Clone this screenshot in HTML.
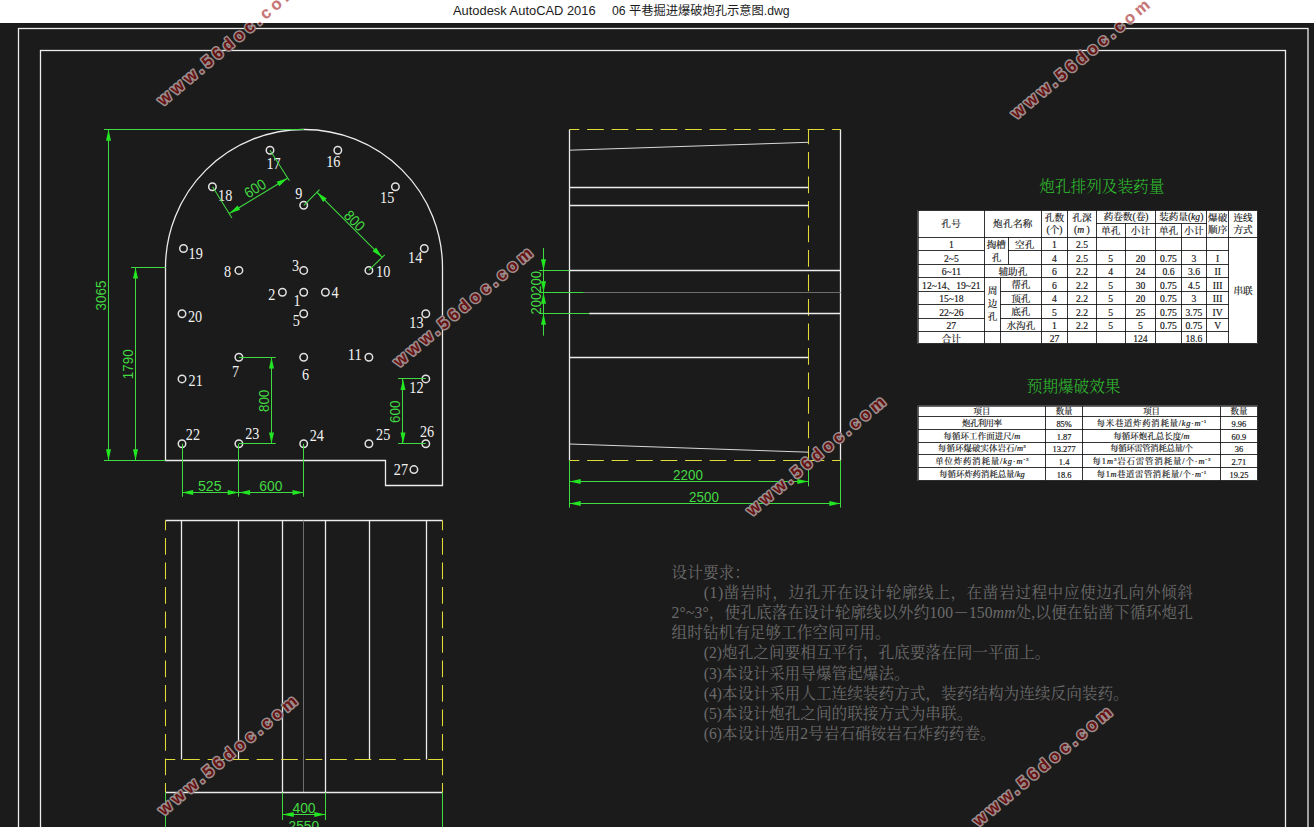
<!DOCTYPE html>
<html lang="zh-CN">
<head>
<meta charset="utf-8">
<title>06 平巷掘进爆破炮孔示意图.dwg</title>
<style>
html,body{margin:0;padding:0;background:#1b1b1b;}
body{width:1314px;height:827px;overflow:hidden;position:relative;font-family:"Liberation Sans","Noto Sans CJK SC",sans-serif;}
#titlebar{position:absolute;left:0;top:0;width:1314px;height:23px;background:#ffffff;color:#111;font-size:12px;line-height:22px;white-space:pre;}
#titletext{position:absolute;left:0;top:0;width:1314px;height:23px;color:#1c1c1c;line-height:22px;white-space:pre;}
#titletext span{position:absolute;top:0;}
#titletext .t1{left:453px;font-size:12.9px;}
#titletext .t2{left:612px;font-size:12.25px;}
#cad{position:absolute;left:0;top:0;width:1314px;height:827px;display:block;}
.w{stroke:#ececec;stroke-width:1.3;fill:none;}
.wt2{stroke:#d8d8d8;stroke-width:1;fill:none;}
.gr{stroke:#6e6e6e;stroke-width:1;fill:none;}
.g{stroke:#42da42;stroke-width:1.05;fill:none;}
.y{stroke:#e2da38;stroke-width:1.05;fill:none;}
.ar{fill:#22e622;stroke:none;}
.h{stroke:#e2e2e2;stroke-width:1.5;fill:none;}
.gt{fill:#42da42;font-family:"Liberation Sans",sans-serif;}
.wt{fill:#f2f2f2;font-family:"Liberation Serif",serif;}
.tb{fill:#ffffff;stroke:none;}
.tl{stroke:#000000;stroke-width:0.8;}
.tt{fill:#161616;stroke:#161616;stroke-width:0.18px;font-family:"Liberation Serif","Noto Serif CJK SC",serif;}
.it{font-style:italic;}
.sup{font-size:5px;}
.ttl{fill:#2fc02f;font-weight:300;font-size:15.6px;font-family:"Liberation Serif","Noto Serif CJK SC",serif;}
.nt{fill:#6b6b6b;font-size:15.65px;font-family:"Liberation Serif","Noto Serif CJK SC",serif;white-space:pre;}
.wm{fill:#681313;stroke:#9a8e8e;stroke-width:3px;paint-order:stroke fill;stroke-linejoin:round;font-family:"Liberation Sans",sans-serif;font-weight:bold;font-size:16.5px;}
.wml{fill:#c47474;stroke:#fbf3f3;stroke-width:1.2px;}
</style>
</head>
<body>
<div id="titlebar"></div>
<svg id="cad" width="1314" height="827" viewBox="0 0 1314 827">
<rect x="0" y="23" width="1314" height="804" fill="#1b1b1b"/>
<rect class="w" x="18.5" y="28.5" width="1289.5" height="820"/>
<rect class="w" x="40.5" y="50.5" width="1245" height="800"/>
<path class="w" d="M165.5 460.5 L165.5 267.4 A138.5 137.9 0 0 1 442.5 267.4 L442.5 485.5 L385.5 485.5 L385.5 460.5 Z" />
<circle class="h" cx="303.7" cy="292.2" r="3.75"/>
<circle class="h" cx="282.4" cy="292.2" r="3.75"/>
<circle class="h" cx="303.7" cy="270.4" r="3.75"/>
<circle class="h" cx="325.4" cy="292.2" r="3.75"/>
<circle class="h" cx="303.7" cy="313.8" r="3.75"/>
<circle class="h" cx="303.7" cy="357.3" r="3.75"/>
<circle class="h" cx="238.9" cy="357.3" r="3.75"/>
<circle class="h" cx="238.9" cy="270.4" r="3.75"/>
<circle class="h" cx="303.7" cy="205.3" r="3.75"/>
<circle class="h" cx="368.9" cy="270.4" r="3.75"/>
<circle class="h" cx="368.9" cy="357.3" r="3.75"/>
<circle class="h" cx="425.8" cy="378.9" r="3.75"/>
<circle class="h" cx="425.8" cy="313.8" r="3.75"/>
<circle class="h" cx="424.3" cy="248.5" r="3.75"/>
<circle class="h" cx="395.4" cy="186.7" r="3.75"/>
<circle class="h" cx="337.8" cy="150.2" r="3.75"/>
<circle class="h" cx="270" cy="150.2" r="3.75"/>
<circle class="h" cx="212.4" cy="186.7" r="3.75"/>
<circle class="h" cx="183.5" cy="248.5" r="3.75"/>
<circle class="h" cx="182" cy="313.8" r="3.75"/>
<circle class="h" cx="182" cy="378.9" r="3.75"/>
<circle class="h" cx="182" cy="443.8" r="3.75"/>
<circle class="h" cx="238.9" cy="443.8" r="3.75"/>
<circle class="h" cx="303.7" cy="443.8" r="3.75"/>
<circle class="h" cx="368.9" cy="443.8" r="3.75"/>
<circle class="h" cx="425.8" cy="443.8" r="3.75"/>
<circle class="h" cx="413.9" cy="469.6" r="3.75"/>
<text class="wt" font-size="16.8" textLength="14.2" lengthAdjust="spacingAndGlyphs" text-anchor="middle" x="273.6" y="169.18">17</text>
<text class="wt" font-size="16.8" textLength="14.2" lengthAdjust="spacingAndGlyphs" text-anchor="middle" x="333.3" y="167.08">16</text>
<text class="wt" font-size="16.8" textLength="14.2" lengthAdjust="spacingAndGlyphs" text-anchor="middle" x="225.2" y="201.08">18</text>
<text class="wt" font-size="16.8" textLength="7.1" lengthAdjust="spacingAndGlyphs" text-anchor="middle" x="298.9" y="198.98">9</text>
<text class="wt" font-size="16.8" textLength="14.2" lengthAdjust="spacingAndGlyphs" text-anchor="middle" x="387.2" y="202.98">15</text>
<text class="wt" font-size="16.8" textLength="14.2" lengthAdjust="spacingAndGlyphs" text-anchor="middle" x="195.7" y="258.68">19</text>
<text class="wt" font-size="16.8" textLength="14.2" lengthAdjust="spacingAndGlyphs" text-anchor="middle" x="415.2" y="263.18">14</text>
<text class="wt" font-size="16.8" textLength="7.1" lengthAdjust="spacingAndGlyphs" text-anchor="middle" x="227.6" y="276.88">8</text>
<text class="wt" font-size="16.8" textLength="7.1" lengthAdjust="spacingAndGlyphs" text-anchor="middle" x="295.5" y="271.18">3</text>
<text class="wt" font-size="16.8" textLength="14.2" lengthAdjust="spacingAndGlyphs" text-anchor="middle" x="383.2" y="276.88">10</text>
<text class="wt" font-size="16.8" textLength="7.1" lengthAdjust="spacingAndGlyphs" text-anchor="middle" x="271.8" y="300.08">2</text>
<text class="wt" font-size="16.8" textLength="7.1" lengthAdjust="spacingAndGlyphs" text-anchor="middle" x="297.1" y="306.18">1</text>
<text class="wt" font-size="16.8" textLength="7.1" lengthAdjust="spacingAndGlyphs" text-anchor="middle" x="335.1" y="298.28">4</text>
<text class="wt" font-size="16.8" textLength="14.2" lengthAdjust="spacingAndGlyphs" text-anchor="middle" x="195.1" y="322.28">20</text>
<text class="wt" font-size="16.8" textLength="7.1" lengthAdjust="spacingAndGlyphs" text-anchor="middle" x="296.4" y="325.98">5</text>
<text class="wt" font-size="16.8" textLength="14.2" lengthAdjust="spacingAndGlyphs" text-anchor="middle" x="416.4" y="328.08">13</text>
<text class="wt" font-size="16.8" textLength="14.2" lengthAdjust="spacingAndGlyphs" text-anchor="middle" x="354.9" y="360.18">11</text>
<text class="wt" font-size="16.8" textLength="7.1" lengthAdjust="spacingAndGlyphs" text-anchor="middle" x="235.6" y="376.88">7</text>
<text class="wt" font-size="16.8" textLength="7.1" lengthAdjust="spacingAndGlyphs" text-anchor="middle" x="305.6" y="380.28">6</text>
<text class="wt" font-size="16.8" textLength="14.2" lengthAdjust="spacingAndGlyphs" text-anchor="middle" x="195.7" y="386.08">21</text>
<text class="wt" font-size="16.8" textLength="14.2" lengthAdjust="spacingAndGlyphs" text-anchor="middle" x="416.4" y="393.08">12</text>
<text class="wt" font-size="16.8" textLength="14.2" lengthAdjust="spacingAndGlyphs" text-anchor="middle" x="192.9" y="439.88">22</text>
<text class="wt" font-size="16.8" textLength="14.2" lengthAdjust="spacingAndGlyphs" text-anchor="middle" x="252.3" y="438.98">23</text>
<text class="wt" font-size="16.8" textLength="14.2" lengthAdjust="spacingAndGlyphs" text-anchor="middle" x="316.8" y="441.18">24</text>
<text class="wt" font-size="16.8" textLength="14.2" lengthAdjust="spacingAndGlyphs" text-anchor="middle" x="383.2" y="439.88">25</text>
<text class="wt" font-size="16.8" textLength="14.2" lengthAdjust="spacingAndGlyphs" text-anchor="middle" x="427" y="436.58">26</text>
<text class="wt" font-size="16.8" textLength="14.2" lengthAdjust="spacingAndGlyphs" text-anchor="middle" x="400.9" y="475.28">27</text>
<line class="g" x1="104" y1="129.5" x2="304" y2="129.5"/>
<line class="g" x1="104" y1="460.5" x2="165.5" y2="460.5"/>
<line class="g" x1="108.5" y1="129.5" x2="108.5" y2="460.5"/>
<polygon class="ar" points="108.5,129.5 111,140.7 106,140.7"/>
<polygon class="ar" points="108.5,460.5 106,449.3 111,449.3"/>
<text class="gt" font-size="15" textLength="29.8" lengthAdjust="spacingAndGlyphs" text-anchor="middle" transform="translate(100.7 295.5) rotate(-90)" x="0" y="5.37">3065</text>
<line class="g" x1="131" y1="267.5" x2="165.5" y2="267.5"/>
<line class="g" x1="135.5" y1="267.4" x2="135.5" y2="460.5"/>
<polygon class="ar" points="135.5,267.4 138,278.6 133,278.6"/>
<polygon class="ar" points="135.5,460.5 133,449.3 138,449.3"/>
<text class="gt" font-size="15" textLength="29.8" lengthAdjust="spacingAndGlyphs" text-anchor="middle" transform="translate(127.8 364.3) rotate(-90)" x="0" y="5.37">1790</text>
<line class="g" x1="238.9" y1="357.5" x2="275.7" y2="357.5"/>
<line class="g" x1="238.9" y1="443.5" x2="275.7" y2="443.5"/>
<line class="g" x1="271.5" y1="357.3" x2="271.5" y2="443.8"/>
<polygon class="ar" points="271.5,357.3 274,368.5 269,368.5"/>
<polygon class="ar" points="271.5,443.8 269,432.6 274,432.6"/>
<text class="gt" font-size="15" textLength="22.35" lengthAdjust="spacingAndGlyphs" text-anchor="middle" transform="translate(263.6 400.9) rotate(-90)" x="0" y="5.37">800</text>
<line class="g" x1="425.8" y1="378.5" x2="398.1" y2="378.5"/>
<line class="g" x1="425.8" y1="443.5" x2="398.1" y2="443.5"/>
<line class="g" x1="402.5" y1="378.9" x2="402.5" y2="443.8"/>
<polygon class="ar" points="403,378.9 405.5,390.1 400.5,390.1"/>
<polygon class="ar" points="403,443.8 400.5,432.6 405.5,432.6"/>
<text class="gt" font-size="15" textLength="22.35" lengthAdjust="spacingAndGlyphs" text-anchor="middle" transform="translate(394.5 411.8) rotate(-90)" x="0" y="5.37">600</text>
<line class="g" x1="182.5" y1="443.8" x2="182.5" y2="496.7"/>
<line class="g" x1="238.5" y1="443.8" x2="238.5" y2="496.7"/>
<line class="g" x1="303.5" y1="443.8" x2="303.5" y2="496.7"/>
<line class="g" x1="182" y1="492.5" x2="303.7" y2="492.5"/>
<polygon class="ar" points="182,492.5 193.2,490 193.2,495"/>
<polygon class="ar" points="238.9,492.5 227.7,495 227.7,490"/>
<polygon class="ar" points="238.9,492.5 250.1,490 250.1,495"/>
<polygon class="ar" points="303.7,492.5 292.5,495 292.5,490"/>
<text class="gt" font-size="15" textLength="23.55" lengthAdjust="spacingAndGlyphs" text-anchor="middle" transform="translate(209.7 485.8) rotate(0)" x="0" y="5.37">525</text>
<text class="gt" font-size="15" textLength="23.1" lengthAdjust="spacingAndGlyphs" text-anchor="middle" transform="translate(270.9 485.8) rotate(0)" x="0" y="5.37">600</text>
<line class="g" x1="270" y1="150.3" x2="289.4" y2="180.7"/>
<line class="g" x1="212.6" y1="186.7" x2="231.9" y2="218"/>
<line class="g" x1="229.3" y1="213.5" x2="287.5" y2="178.2"/>
<polygon class="ar" points="287.5,178.2 279.22,186.15 276.63,181.87"/>
<polygon class="ar" points="229.3,213.5 237.58,205.55 240.17,209.83"/>
<text class="gt" font-size="15" textLength="22.35" lengthAdjust="spacingAndGlyphs" text-anchor="middle" transform="translate(254.9 188.3) rotate(-31.5)" x="0" y="5.37">600</text>
<line class="g" x1="303.9" y1="205.4" x2="319.5" y2="189.6"/>
<line class="g" x1="368.9" y1="270.2" x2="384.7" y2="254.8"/>
<line class="g" x1="317" y1="192.3" x2="382.2" y2="257.3"/>
<polygon class="ar" points="317,192.3 326.69,198.45 323.15,201.99"/>
<polygon class="ar" points="382.2,257.3 372.51,251.15 376.05,247.61"/>
<text class="gt" font-size="15" textLength="22.35" lengthAdjust="spacingAndGlyphs" text-anchor="middle" transform="translate(354.7 220.5) rotate(45)" x="0" y="5.37">800</text>
<line class="w" x1="569.5" y1="129.5" x2="569.5" y2="460.5"/>
<line class="w" x1="840.5" y1="129.5" x2="840.5" y2="460.5"/>
<line class="y" x1="569.5" y1="129.5" x2="840.5" y2="129.5" stroke-dasharray="16.7 7.8" stroke-dashoffset="6.9"/>
<line class="y" x1="569.5" y1="460.5" x2="840.5" y2="460.5" stroke-dasharray="16.7 7.8" stroke-dashoffset="6.9"/>
<line class="y" x1="808.5" y1="129.5" x2="808.5" y2="460.5" stroke-dasharray="16.7 7.8" stroke-dashoffset="1.9"/>
<line class="wt2" x1="569.5" y1="150.2" x2="808.5" y2="142.3"/>
<line class="w" x1="569.5" y1="187.5" x2="808.5" y2="187.5"/>
<line class="w" x1="569.5" y1="205.5" x2="808.5" y2="205.5"/>
<line class="w" x1="569.5" y1="270.5" x2="840.5" y2="270.5"/>
<line class="gr" x1="583.8" y1="292.5" x2="840.5" y2="292.5"/>
<line class="w" x1="589.2" y1="313.5" x2="840.5" y2="313.5"/>
<line class="w" x1="569.5" y1="357.5" x2="808.5" y2="357.5"/>
<line class="wt2" x1="569.5" y1="444" x2="808.5" y2="452.2"/>
<line class="g" x1="543.5" y1="248" x2="543.5" y2="335.7"/>
<line class="g" x1="539.3" y1="270.5" x2="569.5" y2="270.5"/>
<line class="g" x1="539.3" y1="292.5" x2="583.8" y2="292.5"/>
<line class="g" x1="539.3" y1="313.5" x2="589.2" y2="313.5"/>
<polygon class="ar" points="543.5,270.5 541,259.3 546,259.3"/>
<polygon class="ar" points="543.5,292.5 541,281.3 546,281.3"/>
<polygon class="ar" points="543.5,292.5 546,303.7 541,303.7"/>
<polygon class="ar" points="543.5,313.5 546,324.7 541,324.7"/>
<text class="gt" font-size="15" textLength="21.75" lengthAdjust="spacingAndGlyphs" text-anchor="middle" transform="translate(535.9 281.8) rotate(-90)" x="0" y="5.37">200</text>
<text class="gt" font-size="15" textLength="21.75" lengthAdjust="spacingAndGlyphs" text-anchor="middle" transform="translate(535.9 303.5) rotate(-90)" x="0" y="5.37">200</text>
<line class="g" x1="569.5" y1="460.5" x2="569.5" y2="507.6"/>
<line class="g" x1="808.5" y1="460.5" x2="808.5" y2="486.3"/>
<line class="g" x1="840.5" y1="460.5" x2="840.5" y2="507.6"/>
<line class="g" x1="569.5" y1="481.5" x2="808.5" y2="481.5"/>
<line class="g" x1="569.5" y1="503.5" x2="840.5" y2="503.5"/>
<polygon class="ar" points="569.5,481.5 580.7,479 580.7,484"/>
<polygon class="ar" points="808.5,481.5 797.3,484 797.3,479"/>
<polygon class="ar" points="569.5,503.5 580.7,501 580.7,506"/>
<polygon class="ar" points="840.5,503.5 829.3,506 829.3,501"/>
<text class="gt" font-size="15" textLength="29.8" lengthAdjust="spacingAndGlyphs" text-anchor="middle" transform="translate(688 474.5) rotate(0)" x="0" y="5.37">2200</text>
<text class="gt" font-size="15" textLength="29.8" lengthAdjust="spacingAndGlyphs" text-anchor="middle" transform="translate(704 496.5) rotate(0)" x="0" y="5.37">2500</text>
<line class="w" x1="165.5" y1="520.5" x2="442.5" y2="520.5"/>
<line class="w" x1="181.5" y1="520.5" x2="181.5" y2="759.5"/>
<line class="w" x1="238.5" y1="520.5" x2="238.5" y2="759.5"/>
<line class="w" x1="369.5" y1="520.5" x2="369.5" y2="759.5"/>
<line class="w" x1="426.5" y1="520.5" x2="426.5" y2="759.5"/>
<line class="w" x1="282.5" y1="520.5" x2="282.5" y2="792.5"/>
<line class="w" x1="325.5" y1="520.5" x2="325.5" y2="792.5"/>
<line class="gr" x1="303.5" y1="520.5" x2="303.5" y2="792.5"/>
<line class="w" x1="165.5" y1="792.5" x2="442.5" y2="792.5"/>
<line class="y" x1="165.5" y1="520.5" x2="165.5" y2="792.5" stroke-dasharray="16.7 7.8" stroke-dashoffset="6.9"/>
<line class="y" x1="442.5" y1="520.5" x2="442.5" y2="792.5" stroke-dasharray="16.7 7.8" stroke-dashoffset="6.9"/>
<line class="y" x1="165.5" y1="759.5" x2="442.5" y2="759.5" stroke-dasharray="16.7 7.8" stroke-dashoffset="6.9"/>
<line class="g" x1="165.5" y1="792.5" x2="165.5" y2="840"/>
<line class="g" x1="442.5" y1="792.5" x2="442.5" y2="840"/>
<line class="g" x1="282.5" y1="792.5" x2="282.5" y2="820"/>
<line class="g" x1="325.5" y1="792.5" x2="325.5" y2="820"/>
<line class="g" x1="282.5" y1="814.5" x2="325.5" y2="814.5"/>
<polygon class="ar" points="282.5,814.5 293.7,812 293.7,817"/>
<polygon class="ar" points="325.5,814.5 314.3,817 314.3,812"/>
<text class="gt" font-size="15" textLength="23.1" lengthAdjust="spacingAndGlyphs" text-anchor="middle" transform="translate(304 807.8) rotate(0)" x="0" y="5.37">400</text>
<text class="gt" font-size="15" textLength="30.4" lengthAdjust="spacingAndGlyphs" text-anchor="middle" transform="translate(303.8 825.3) rotate(0)" x="0" y="5.37">2550</text>
<rect class="tb" x="917.7" y="210" width="340.2" height="133.9"/>
<rect class="tl" fill="none" x="918.2" y="210.5" width="339.2" height="132.9"/>
<line class="tl" x1="984.5" y1="210.5" x2="984.5" y2="237.1"/>
<line class="tl" x1="1041.5" y1="210.5" x2="1041.5" y2="237.1"/>
<line class="tl" x1="1067.5" y1="210.5" x2="1067.5" y2="237.1"/>
<line class="tl" x1="1096.5" y1="210.5" x2="1096.5" y2="237.1"/>
<line class="tl" x1="1155.5" y1="210.5" x2="1155.5" y2="237.1"/>
<line class="tl" x1="1206.5" y1="210.5" x2="1206.5" y2="237.1"/>
<line class="tl" x1="1228.5" y1="210.5" x2="1228.5" y2="237.1"/>
<line class="tl" x1="1125.5" y1="223.4" x2="1125.5" y2="237.1"/>
<line class="tl" x1="1181.5" y1="223.4" x2="1181.5" y2="237.1"/>
<line class="tl" x1="1096.3" y1="223.5" x2="1206.7" y2="223.5"/>
<line class="tl" x1="918.2" y1="237.5" x2="1257.4" y2="237.5"/>
<line class="tl" x1="984.5" y1="237.1" x2="984.5" y2="343.4"/>
<line class="tl" x1="1041.5" y1="237.1" x2="1041.5" y2="343.4"/>
<line class="tl" x1="1067.5" y1="237.1" x2="1067.5" y2="343.4"/>
<line class="tl" x1="1096.5" y1="237.1" x2="1096.5" y2="343.4"/>
<line class="tl" x1="1125.5" y1="237.1" x2="1125.5" y2="343.4"/>
<line class="tl" x1="1155.5" y1="237.1" x2="1155.5" y2="343.4"/>
<line class="tl" x1="1181.5" y1="237.1" x2="1181.5" y2="343.4"/>
<line class="tl" x1="1206.5" y1="237.1" x2="1206.5" y2="343.4"/>
<line class="tl" x1="1228.5" y1="237.1" x2="1228.5" y2="343.4"/>
<line class="tl" x1="918.2" y1="250.5" x2="984.5" y2="250.5"/>
<line class="tl" x1="1041.3" y1="250.5" x2="1228.6" y2="250.5"/>
<line class="tl" x1="918.2" y1="264.5" x2="984.5" y2="264.5"/>
<line class="tl" x1="1041.3" y1="264.5" x2="1228.6" y2="264.5"/>
<line class="tl" x1="918.2" y1="277.5" x2="984.5" y2="277.5"/>
<line class="tl" x1="1041.3" y1="277.5" x2="1228.6" y2="277.5"/>
<line class="tl" x1="918.2" y1="291.5" x2="984.5" y2="291.5"/>
<line class="tl" x1="1041.3" y1="291.5" x2="1228.6" y2="291.5"/>
<line class="tl" x1="918.2" y1="304.5" x2="984.5" y2="304.5"/>
<line class="tl" x1="1041.3" y1="304.5" x2="1228.6" y2="304.5"/>
<line class="tl" x1="918.2" y1="318.5" x2="984.5" y2="318.5"/>
<line class="tl" x1="1041.3" y1="318.5" x2="1228.6" y2="318.5"/>
<line class="tl" x1="918.2" y1="331.5" x2="984.5" y2="331.5"/>
<line class="tl" x1="1041.3" y1="331.5" x2="1228.6" y2="331.5"/>
<line class="tl" x1="1008.5" y1="237.1" x2="1008.5" y2="264.5"/>
<line class="tl" x1="1008.1" y1="250.5" x2="1041.3" y2="250.5"/>
<line class="tl" x1="984.5" y1="264.5" x2="1041.3" y2="264.5"/>
<line class="tl" x1="984.5" y1="277.5" x2="1041.3" y2="277.5"/>
<line class="tl" x1="1000.5" y1="277.7" x2="1000.5" y2="343.4"/>
<line class="tl" x1="1000.4" y1="291.5" x2="1041.3" y2="291.5"/>
<line class="tl" x1="1000.4" y1="304.5" x2="1041.3" y2="304.5"/>
<line class="tl" x1="1000.4" y1="318.5" x2="1041.3" y2="318.5"/>
<line class="tl" x1="984.5" y1="331.5" x2="1041.3" y2="331.5"/>
<text class="tt" font-size="9.6" text-anchor="middle" x="951.35" y="227.26" letter-spacing="0.6">孔号</text>
<text class="tt" font-size="9.6" text-anchor="middle" x="1012.9" y="227.26" letter-spacing="0.3">炮孔名称</text>
<text class="tt" font-size="9.6" text-anchor="middle" x="1054.45" y="220.96">孔数</text>
<text class="tt" font-size="9.6" text-anchor="middle" x="1054.45" y="232.96">(个)</text>
<text class="tt" font-size="9.6" text-anchor="middle" x="1081.95" y="220.96">孔深</text>
<text class="tt" font-size="9.6" text-anchor="middle" x="1081.95" y="232.96">(<tspan class="it">m</tspan> )</text>
<text class="tt" font-size="9.6" text-anchor="middle" x="1126.05" y="220.46">药卷数(卷)</text>
<text class="tt" font-size="9.6" text-anchor="middle" x="1181.25" y="220.46">装药量(<tspan class="it">kg</tspan>)</text>
<text class="tt" font-size="9.6" text-anchor="middle" x="1110.7" y="233.96">单孔</text>
<text class="tt" font-size="9.6" text-anchor="middle" x="1140.45" y="233.96">小计</text>
<text class="tt" font-size="9.6" text-anchor="middle" x="1168.5" y="233.96">单孔</text>
<text class="tt" font-size="9.6" text-anchor="middle" x="1193.95" y="233.96">小计</text>
<text class="tt" font-size="9.6" text-anchor="middle" x="1217.65" y="220.96">爆破</text>
<text class="tt" font-size="9.6" text-anchor="middle" x="1217.65" y="232.96">顺序</text>
<text class="tt" font-size="9.6" text-anchor="middle" x="1243" y="220.96">连线</text>
<text class="tt" font-size="9.6" text-anchor="middle" x="1243" y="232.96">方式</text>
<text class="tt" font-size="9.6" text-anchor="middle" x="951.35" y="248.01">1</text>
<text class="tt" font-size="9.6" text-anchor="middle" x="1054.45" y="248.01">1</text>
<text class="tt" font-size="9.6" text-anchor="middle" x="1081.95" y="248.01">2.5</text>
<text class="tt" font-size="9.6" text-anchor="middle" x="951.35" y="261.71">2~5</text>
<text class="tt" font-size="9.6" text-anchor="middle" x="1054.45" y="261.71">4</text>
<text class="tt" font-size="9.6" text-anchor="middle" x="1081.95" y="261.71">2.5</text>
<text class="tt" font-size="9.6" text-anchor="middle" x="1110.7" y="261.71">5</text>
<text class="tt" font-size="9.6" text-anchor="middle" x="1140.45" y="261.71">20</text>
<text class="tt" font-size="9.6" text-anchor="middle" x="1168.5" y="261.71">0.75</text>
<text class="tt" font-size="9.6" text-anchor="middle" x="1193.95" y="261.71">3</text>
<text class="tt" font-size="9.6" text-anchor="middle" x="1217.65" y="261.71">I</text>
<text class="tt" font-size="9.6" text-anchor="middle" x="951.35" y="275.16">6~11</text>
<text class="tt" font-size="9.6" text-anchor="middle" x="1054.45" y="275.16">6</text>
<text class="tt" font-size="9.6" text-anchor="middle" x="1081.95" y="275.16">2.2</text>
<text class="tt" font-size="9.6" text-anchor="middle" x="1110.7" y="275.16">4</text>
<text class="tt" font-size="9.6" text-anchor="middle" x="1140.45" y="275.16">24</text>
<text class="tt" font-size="9.6" text-anchor="middle" x="1168.5" y="275.16">0.6</text>
<text class="tt" font-size="9.6" text-anchor="middle" x="1193.95" y="275.16">3.6</text>
<text class="tt" font-size="9.6" text-anchor="middle" x="1217.65" y="275.16">II</text>
<text class="tt" font-size="9.6" text-anchor="middle" x="951.35" y="288.61" textLength="58.5" lengthAdjust="spacingAndGlyphs">12~14、19~21</text>
<text class="tt" font-size="9.6" text-anchor="middle" x="1054.45" y="288.61">6</text>
<text class="tt" font-size="9.6" text-anchor="middle" x="1081.95" y="288.61">2.2</text>
<text class="tt" font-size="9.6" text-anchor="middle" x="1110.7" y="288.61">5</text>
<text class="tt" font-size="9.6" text-anchor="middle" x="1140.45" y="288.61">30</text>
<text class="tt" font-size="9.6" text-anchor="middle" x="1168.5" y="288.61">0.75</text>
<text class="tt" font-size="9.6" text-anchor="middle" x="1193.95" y="288.61">4.5</text>
<text class="tt" font-size="9.6" text-anchor="middle" x="1217.65" y="288.61">III</text>
<text class="tt" font-size="9.6" text-anchor="middle" x="951.35" y="302.16">15~18</text>
<text class="tt" font-size="9.6" text-anchor="middle" x="1054.45" y="302.16">4</text>
<text class="tt" font-size="9.6" text-anchor="middle" x="1081.95" y="302.16">2.2</text>
<text class="tt" font-size="9.6" text-anchor="middle" x="1110.7" y="302.16">5</text>
<text class="tt" font-size="9.6" text-anchor="middle" x="1140.45" y="302.16">20</text>
<text class="tt" font-size="9.6" text-anchor="middle" x="1168.5" y="302.16">0.75</text>
<text class="tt" font-size="9.6" text-anchor="middle" x="1193.95" y="302.16">3</text>
<text class="tt" font-size="9.6" text-anchor="middle" x="1217.65" y="302.16">III</text>
<text class="tt" font-size="9.6" text-anchor="middle" x="951.35" y="315.71">22~26</text>
<text class="tt" font-size="9.6" text-anchor="middle" x="1054.45" y="315.71">5</text>
<text class="tt" font-size="9.6" text-anchor="middle" x="1081.95" y="315.71">2.2</text>
<text class="tt" font-size="9.6" text-anchor="middle" x="1110.7" y="315.71">5</text>
<text class="tt" font-size="9.6" text-anchor="middle" x="1140.45" y="315.71">25</text>
<text class="tt" font-size="9.6" text-anchor="middle" x="1168.5" y="315.71">0.75</text>
<text class="tt" font-size="9.6" text-anchor="middle" x="1193.95" y="315.71">3.75</text>
<text class="tt" font-size="9.6" text-anchor="middle" x="1217.65" y="315.71">IV</text>
<text class="tt" font-size="9.6" text-anchor="middle" x="951.35" y="329.11">27</text>
<text class="tt" font-size="9.6" text-anchor="middle" x="1054.45" y="329.11">1</text>
<text class="tt" font-size="9.6" text-anchor="middle" x="1081.95" y="329.11">2.2</text>
<text class="tt" font-size="9.6" text-anchor="middle" x="1110.7" y="329.11">5</text>
<text class="tt" font-size="9.6" text-anchor="middle" x="1140.45" y="329.11">5</text>
<text class="tt" font-size="9.6" text-anchor="middle" x="1168.5" y="329.11">0.75</text>
<text class="tt" font-size="9.6" text-anchor="middle" x="1193.95" y="329.11">0.75</text>
<text class="tt" font-size="9.6" text-anchor="middle" x="1217.65" y="329.11">V</text>
<text class="tt" font-size="9.6" text-anchor="middle" x="951.35" y="341.56">合计</text>
<text class="tt" font-size="9.6" text-anchor="middle" x="1054.45" y="341.56">27</text>
<text class="tt" font-size="9.6" text-anchor="middle" x="1140.45" y="341.56">124</text>
<text class="tt" font-size="9.6" text-anchor="middle" x="1193.95" y="341.56">18.6</text>
<text class="tt" font-size="9.6" text-anchor="middle" x="996.3" y="247.96">掏槽</text>
<text class="tt" font-size="9.6" text-anchor="middle" x="996.6" y="261.46">孔</text>
<text class="tt" font-size="9.6" text-anchor="middle" x="1024.7" y="247.96">空孔</text>
<text class="tt" font-size="9.6" text-anchor="middle" x="1012.9" y="274.96">辅助孔</text>
<text class="tt" font-size="9.6" text-anchor="middle" x="992.45" y="294.46">周</text>
<text class="tt" font-size="9.6" text-anchor="middle" x="992.45" y="307.46">边</text>
<text class="tt" font-size="9.6" text-anchor="middle" x="992.45" y="320.46">孔</text>
<text class="tt" font-size="9.6" text-anchor="middle" x="1020.85" y="288.26">帮孔</text>
<text class="tt" font-size="9.6" text-anchor="middle" x="1020.85" y="301.96">顶孔</text>
<text class="tt" font-size="9.6" text-anchor="middle" x="1020.85" y="315.46">底孔</text>
<text class="tt" font-size="9.6" text-anchor="middle" x="1020.85" y="328.76">水沟孔</text>
<text class="tt" font-size="9.6" text-anchor="middle" x="1243" y="293.96">串联</text>
<rect class="tb" x="917.7" y="405.7" width="340.2" height="75.2"/>
<rect class="tl" fill="none" x="918.2" y="406.2" width="339.2" height="74.2"/>
<line class="tl" x1="1045.5" y1="406.2" x2="1045.5" y2="480.4"/>
<line class="tl" x1="1082.5" y1="406.2" x2="1082.5" y2="480.4"/>
<line class="tl" x1="1220.5" y1="406.2" x2="1220.5" y2="480.4"/>
<line class="tl" x1="918.2" y1="416.5" x2="1257.4" y2="416.5"/>
<line class="tl" x1="918.2" y1="429.5" x2="1257.4" y2="429.5"/>
<line class="tl" x1="918.2" y1="442.5" x2="1257.4" y2="442.5"/>
<line class="tl" x1="918.2" y1="454.5" x2="1257.4" y2="454.5"/>
<line class="tl" x1="918.2" y1="467.5" x2="1257.4" y2="467.5"/>
<text class="tt" font-size="8.4" text-anchor="middle" x="981.9" y="414.12">项目</text>
<text class="tt" font-size="8.4" text-anchor="middle" x="1064.1" y="414.12">数量</text>
<text class="tt" font-size="8.4" text-anchor="middle" x="1151.5" y="414.12">项目</text>
<text class="tt" font-size="8.4" text-anchor="middle" x="1238.9" y="414.12">数量</text>
<text class="tt" font-size="8.4" text-anchor="middle" x="981.9" y="425.87" textLength="39.7" lengthAdjust="spacing">炮孔利用率</text>
<text class="tt" font-size="8.4" text-anchor="middle" x="1064.1" y="427.07">85%</text>
<text class="tt" font-size="8.4" text-anchor="middle" x="1151.5" y="425.87" textLength="109.6" lengthAdjust="spacing">每米巷道炸药消耗量/<tspan class="it">kg</tspan>·<tspan class="it">m</tspan><tspan class="sup" dy="-3">-1</tspan></text>
<text class="tt" font-size="8.4" text-anchor="middle" x="1238.9" y="427.07">9.96</text>
<text class="tt" font-size="8.4" text-anchor="middle" x="981.9" y="438.62" textLength="76.7" lengthAdjust="spacing">每循环工作面进尺/<tspan class="it">m</tspan></text>
<text class="tt" font-size="8.4" text-anchor="middle" x="1064.1" y="439.82">1.87</text>
<text class="tt" font-size="8.4" text-anchor="middle" x="1151.5" y="438.62" textLength="76.2" lengthAdjust="spacing">每循环炮孔总长度/<tspan class="it">m</tspan></text>
<text class="tt" font-size="8.4" text-anchor="middle" x="1238.9" y="439.82">60.9</text>
<text class="tt" font-size="8.4" text-anchor="middle" x="981.9" y="451.22" textLength="87.7" lengthAdjust="spacing">每循环爆破实体岩石/<tspan class="it">m</tspan><tspan class="sup" dy="-3">3</tspan></text>
<text class="tt" font-size="8.4" text-anchor="middle" x="1064.1" y="452.42">13.277</text>
<text class="tt" font-size="8.4" text-anchor="middle" x="1151.5" y="451.22" textLength="82.7" lengthAdjust="spacing">每循环雷管消耗总量/个</text>
<text class="tt" font-size="8.4" text-anchor="middle" x="1238.9" y="452.42">36</text>
<text class="tt" font-size="8.4" text-anchor="middle" x="981.9" y="464.07" textLength="93.2" lengthAdjust="spacing">单位炸药消耗量/<tspan class="it">kg</tspan>·<tspan class="it">m</tspan><tspan class="sup" dy="-3">-3</tspan></text>
<text class="tt" font-size="8.4" text-anchor="middle" x="1064.1" y="465.27">1.4</text>
<text class="tt" font-size="8.4" text-anchor="middle" x="1151.5" y="464.07" textLength="117.8" lengthAdjust="spacing">每1<tspan class="it">m</tspan><tspan class="sup" dy="-3">3</tspan><tspan dy="3">岩石雷管消耗量/个·</tspan><tspan class="it">m</tspan><tspan class="sup" dy="-3">-3</tspan></text>
<text class="tt" font-size="8.4" text-anchor="middle" x="1238.9" y="465.27">2.71</text>
<text class="tt" font-size="8.4" text-anchor="middle" x="981.9" y="476.82" textLength="85.5" lengthAdjust="spacing">每循环炸药消耗总量/<tspan class="it">kg</tspan></text>
<text class="tt" font-size="8.4" text-anchor="middle" x="1064.1" y="478.02">18.6</text>
<text class="tt" font-size="8.4" text-anchor="middle" x="1151.5" y="476.82" textLength="109.6" lengthAdjust="spacing">每1<tspan class="it">m</tspan>巷道雷管消耗量/个·<tspan class="it">m</tspan><tspan class="sup" dy="-3">-1</tspan></text>
<text class="tt" font-size="8.4" text-anchor="middle" x="1238.9" y="478.02">19.25</text>
<text class="ttl" x="1101.8" y="192.2" text-anchor="middle" textLength="125" lengthAdjust="spacingAndGlyphs">炮孔排列及装药量</text>
<text class="ttl" x="1073.6" y="391.6" text-anchor="middle" textLength="93.5" lengthAdjust="spacingAndGlyphs">预期爆破效果</text>
<text class="nt" x="671.6" y="578.3">设计要求：</text>
<text class="nt" x="703.8" y="598.34" textLength="489" lengthAdjust="spacing">(1)凿岩时，边孔开在设计轮廓线上，在凿岩过程中应使边孔向外倾斜</text>
<text class="nt" x="671.6" y="618.38" textLength="521.2" lengthAdjust="spacing">2°~3°，使孔底落在设计轮廓线以外约100－150<tspan class="it">mm</tspan>处,以便在钻凿下循环炮孔</text>
<text class="nt" x="671.6" y="638.42">组时钻机有足够工作空间可用。</text>
<text class="nt" x="703.8" y="658.46">(2)炮孔之间要相互平行，孔底要落在同一平面上。</text>
<text class="nt" x="703.8" y="678.5">(3)本设计采用导爆管起爆法。</text>
<text class="nt" x="703.8" y="698.54">(4)本设计采用人工连续装药方式，装药结构为连续反向装药。</text>
<text class="nt" x="703.8" y="718.58">(5)本设计炮孔之间的联接方式为串联。</text>
<text class="nt" x="703.8" y="738.62">(6)本设计选用2号岩石硝铵岩石炸药药卷。</text>
<clipPath id="cpbar"><rect x="0" y="0" width="1314" height="23"/></clipPath>
<clipPath id="cpcad"><rect x="0" y="23" width="1314" height="804"/></clipPath>
<g clip-path="url(#cpcad)">
<text class="wm" transform="translate(163 106.2) rotate(-40)" x="0" y="0" textLength="175.5" lengthAdjust="spacing">www.56doc.com</text>
<text class="wm" transform="translate(1016.5 119.6) rotate(-40)" x="0" y="0" textLength="175.5" lengthAdjust="spacing">www.56doc.com</text>
<text class="wm" transform="translate(399 367.8) rotate(-40)" x="0" y="0" textLength="175.5" lengthAdjust="spacing">www.56doc.com</text>
<text class="wm" transform="translate(752 516.6) rotate(-40)" x="0" y="0" textLength="175.5" lengthAdjust="spacing">www.56doc.com</text>
<text class="wm" transform="translate(163.8 815.9) rotate(-40)" x="0" y="0" textLength="175.5" lengthAdjust="spacing">www.56doc.com</text>
<text class="wm" transform="translate(978.5 827.1) rotate(-40)" x="0" y="0" textLength="175.5" lengthAdjust="spacing">www.56doc.com</text>
</g>
<g clip-path="url(#cpbar)">
<text class="wm wml" transform="translate(163 106.2) rotate(-40)" x="0" y="0" textLength="175.5" lengthAdjust="spacing">www.56doc.com</text>
<text class="wm wml" transform="translate(1016.5 119.6) rotate(-40)" x="0" y="0" textLength="175.5" lengthAdjust="spacing">www.56doc.com</text>
</g>
</svg>
<div id="titletext"><span class="t1">Autodesk AutoCAD 2016</span><span class="t2">06 平巷掘进爆破炮孔示意图.dwg</span></div>
</body>
</html>
